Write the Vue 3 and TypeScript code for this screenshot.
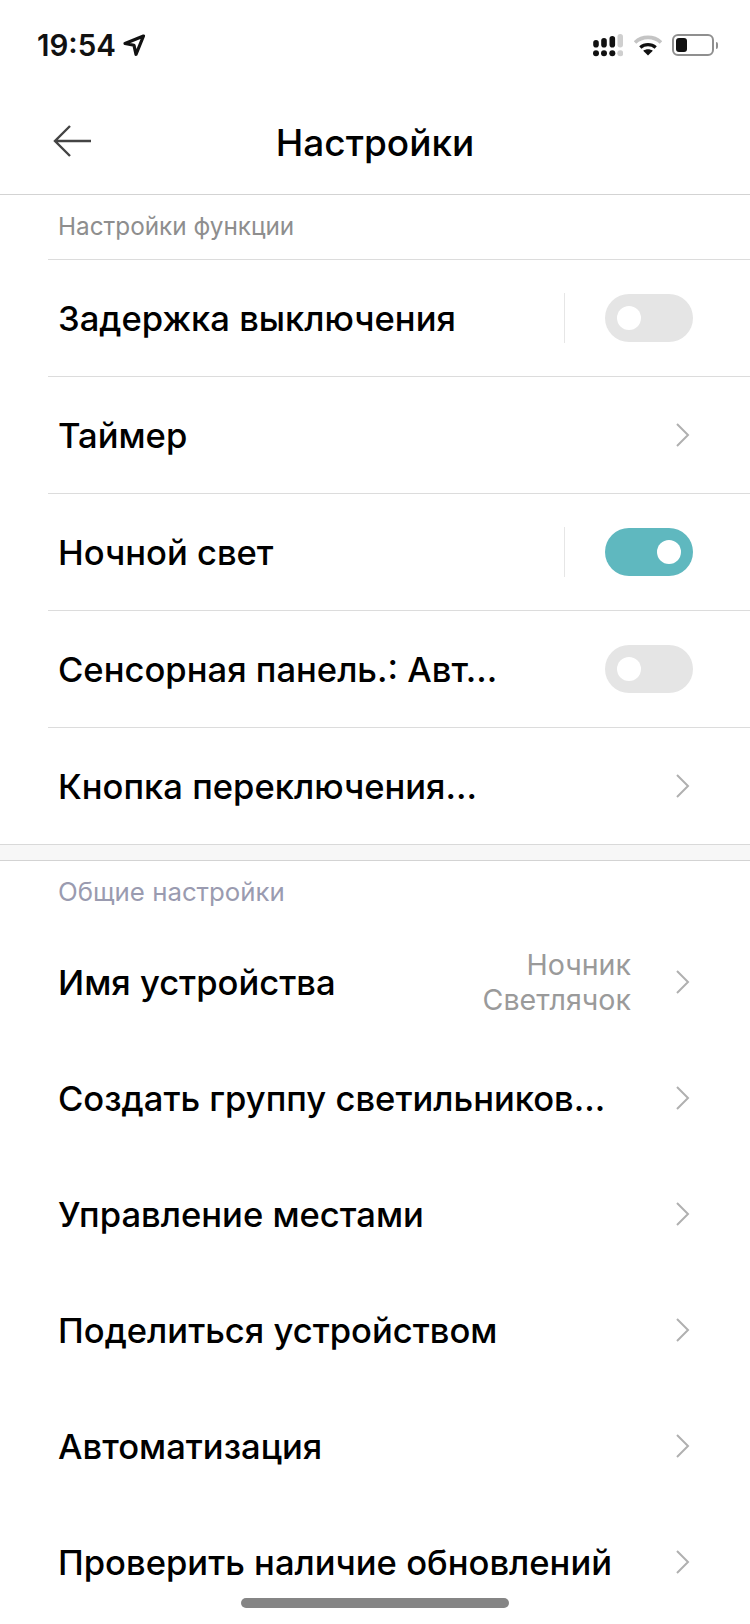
<script setup lang="ts">
type Row = { label: string; kind: "toggle" | "chevron"; on?: boolean; divider?: boolean };

const functionRows: Row[] = [
  { label: "Задержка выключения", kind: "toggle", divider: true },
  { label: "Таймер", kind: "chevron" },
  { label: "Ночной свет", kind: "toggle", on: true, divider: true },
  { label: "Сенсорная панель.: Авт...", kind: "toggle" },
  { label: "Кнопка переключения...", kind: "chevron" },
];

const generalRows = [
  "Создать группу светильников...",
  "Управление местами",
  "Поделиться устройством",
  "Автоматизация",
  "Проверить наличие обновлений",
];
</script>

<template>
  <div class="page">
    <div class="status">
      <div class="status__left">
        <span class="status__time">19:54</span>
        <svg class="status__loc" width="24" height="24" viewBox="0 0 24 24">
          <path d="M21.500 3 3 10.500l9 1.800 2 9z" fill="none" stroke="#111" stroke-width="3.200" stroke-linejoin="round" />
        </svg>
      </div>
      <div class="status__right">
        <svg width="30" height="24" viewBox="0 0 30 24">
          <g fill="#111">
            <rect x="0.200" y="7" width="5.600" height="7.500" rx="2.800" />
            <rect x="8.200" y="5" width="5.600" height="9.500" rx="2.800" />
            <rect x="16.500" y="3" width="5.600" height="11.500" rx="2.800" />
            <circle cx="3" cy="20.300" r="3" />
            <circle cx="11" cy="20.300" r="3" />
            <circle cx="19.300" cy="20.300" r="3" />
          </g>
          <g fill="#cfcfcf">
            <rect x="24.500" y="1" width="5.500" height="13.500" rx="2.700" />
            <circle cx="27.300" cy="20.300" r="3" />
          </g>
        </svg>
        <svg class="status__wifi" width="28" height="22" viewBox="0 0 28 22">
          <path d="M1 8.500C8 1.700 20 1.700 27 8.500" fill="none" stroke="#c4c4c4" stroke-width="3.600" />
          <path d="M6.300 13.500c4.500-3.800 10.900-3.800 15.400 0" fill="none" stroke="#111" stroke-width="3.400" />
          <path d="M14 21.500 9.200 16.800c2.800-2 6.800-2 9.600 0z" fill="#111" />
        </svg>
        <div class="battery">
          <div class="battery__level" />
        </div>
        <div class="battery__cap" />
      </div>
    </div>

    <header class="nav">
      <svg class="nav__back" width="42" height="34" viewBox="0 0 42 34">
        <path d="M40 17H4M19 2 4 17l15 15" fill="none" stroke="#444" stroke-width="2.400" />
      </svg>
      <h1 class="nav__title">Настройки</h1>
    </header>

    <section class="group">
      <h2 class="group__title group__title--ruled">Настройки функции</h2>
      <div v-for="row in functionRows" :key="row.label" class="row row--ruled">
        <span class="row__label">{{ row.label }}</span>
        <span v-if="row.divider" class="row__divider" />
        <span v-if="row.kind === 'toggle'" class="toggle" :class="{ 'toggle--on': row.on }">
          <span class="toggle__knob" />
        </span>
        <svg v-else class="chevron" width="16" height="26" viewBox="0 0 16 26">
          <path d="M2 2l11 11L2 24" fill="none" stroke="#b0b0b0" stroke-width="2" />
        </svg>
      </div>
    </section>

    <div class="band" />

    <section class="group">
      <h2 class="group__title group__title--muted">Общие настройки</h2>
      <div class="row row--plain row--first">
        <span class="row__label">Имя устройства</span>
        <span class="row__value">Ночник<br />Светлячок</span>
        <svg class="chevron" width="16" height="26" viewBox="0 0 16 26">
          <path d="M2 2l11 11L2 24" fill="none" stroke="#b0b0b0" stroke-width="2" />
        </svg>
      </div>
      <div v-for="label in generalRows" :key="label" class="row row--plain">
        <span class="row__label">{{ label }}</span>
        <svg class="chevron" width="16" height="26" viewBox="0 0 16 26">
          <path d="M2 2l11 11L2 24" fill="none" stroke="#b0b0b0" stroke-width="2" />
        </svg>
      </div>
    </section>

    <div class="home" />
  </div>
</template>

<style>
body {
  margin: 0;
  background: #fff;
}
</style>

<style scoped>
.page {
  position: relative;
  width: 750px;
  height: 1624px;
  overflow: hidden;
  background: #fff;
  color: #000;
  font-family: Inter, "Liberation Sans", sans-serif;
}

.status {
  display: flex;
  align-items: center;
  justify-content: space-between;
  height: 90px;
  padding: 0 32px 0 37px;
  box-sizing: border-box;
}
.status__left {
  display: flex;
  align-items: center;
  gap: 6px;
}
.status__time {
  font-size: 29.500px;
  font-weight: 600;
  color: #111;
}
.status__right {
  display: flex;
  align-items: center;
}
.status__wifi {
  margin-left: 11px;
}
.battery {
  width: 42px;
  height: 22px;
  margin-left: 10px;
  padding: 2px 2px;
  box-sizing: border-box;
  border: 2px solid #8f8f8f;
  border-radius: 6px;
}
.battery__level {
  width: 11px;
  height: 100%;
  background: #111;
  border-radius: 3px;
}
.battery__cap {
  width: 2px;
  height: 7px;
  margin-left: 2px;
  background: #8f8f8f;
  border-radius: 0 2px 2px 0;
}

.nav {
  position: relative;
  display: flex;
  align-items: center;
  justify-content: center;
  height: 104px;
  border-bottom: 1px solid #d3d3d3;
}
.nav__back {
  position: absolute;
  left: 51px;
  top: 34px;
}
.nav__title {
  margin: 0;
  font-size: 37px;
  font-weight: 500;
}

.group__title {
  display: flex;
  align-items: center;
  margin: 0;
  font-weight: 400;
  color: #8e8e8e;
}
.group__title--ruled {
  height: 62px;
  margin-left: 48px;
  padding-left: 10px;
  padding-bottom: 2px;
  font-size: 24.300px;
  border-bottom: 1px solid #dcdcdc;
}
.group__title--muted {
  height: 60px;
  padding-bottom: 3px;
  padding-left: 58px;
  font-size: 25.800px;
  color: #9a9bb0;
}

.row {
  display: flex;
  align-items: center;
  padding-right: 57px;
  box-sizing: border-box;
}
.row--ruled {
  height: 117px;
  margin-left: 48px;
  padding-left: 10px;
  border-bottom: 1px solid #dcdcdc;
}
.row--ruled:last-child {
  height: 116px;
  border-bottom: none;
}
.row--plain {
  height: 116px;
  padding-left: 58px;
}
.row__label {
  flex: 1;
  font-size: 34.600px;
  font-weight: 500;
  white-space: nowrap;
}
.row__divider {
  width: 1px;
  height: 50px;
  margin-right: 40px;
  background: #e6e6e6;
}
.row__value {
  margin-right: 44px;
  font-size: 28.600px;
  line-height: 35.500px;
  color: #9a9a9a;
  text-align: right;
}

.toggle {
  display: flex;
  align-items: center;
  width: 88px;
  height: 48px;
  padding: 0 12px;
  box-sizing: border-box;
  background: #e5e5e5;
  border-radius: 24px;
}
.toggle--on {
  justify-content: flex-end;
  background: #5fb8bf;
}
.toggle__knob {
  width: 24px;
  height: 24px;
  background: #fff;
  border-radius: 50%;
}

.chevron {
  flex-shrink: 0;
  margin-right: 2px;
}

.band {
  height: 15px;
  background: #f7f7f7;
  border-top: 1px solid #d9d9d9;
  border-bottom: 1px solid #d3d3d3;
}

.home {
  position: absolute;
  left: 241px;
  top: 1598px;
  width: 268px;
  height: 10px;
  background: #858585;
  border-radius: 5px;
}
</style>
